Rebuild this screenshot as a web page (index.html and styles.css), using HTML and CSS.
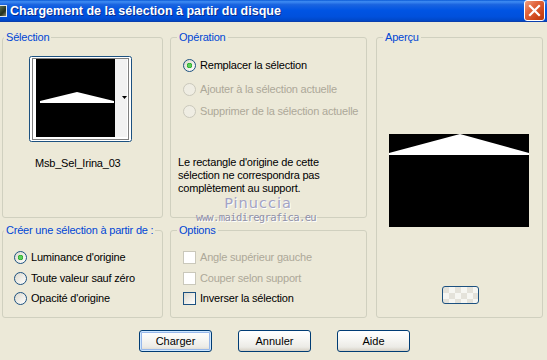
FILE: index.html
```html
<!DOCTYPE html>
<html lang="fr">
<head>
<meta charset="utf-8">
<title>Chargement de la sélection à partir du disque</title>
<link rel="stylesheet" href="styles.css">
</head>
<body>
<div class="window">
  <div class="titlebar">
    <span class="app-icon"></span>
    <span class="title">Chargement de la sélection à partir du disque</span>
    <span class="close">
      <svg width="13" height="13" viewBox="0 0 13 13"><path d="M2 2 L11 11 M11 2 L2 11" stroke="#fff" stroke-width="2.2" stroke-linecap="square"/></svg>
    </span>
  </div>
  <div class="content">
    <div class="groups">
      <section class="group g-sel">
        <span class="legend">Sélection</span>
        <div class="thumb">
          <svg width="103" height="86" viewBox="0 0 103 86">
            <rect x="0.5" y="0.5" width="102" height="85" rx="2" fill="#fff" stroke="#1c5180"/>
            <rect x="3.5" y="2.5" width="96" height="81" fill="none" stroke="#000" stroke-dasharray="1 1"/>
            <rect x="7" y="3" width="79" height="78" fill="#000"/>
            <rect x="86" y="3" width="12" height="78" fill="#f2f2f2"/>
            <polygon points="11,45 48,36 85,45 85,47 11,47" fill="#fff"/>
            <polygon points="93,40 98,40 95.5,43" fill="#000"/>
          </svg>
        </div>
        <div class="name">Msb_Sel_Irina_03</div>
      </section>

      <section class="group g-op">
        <span class="legend">Opération</span>
        <div class="opt r1"><span class="radio checked"></span><span>Remplacer la sélection</span></div>
        <div class="opt r2 disabled"><span class="radio"></span><span>Ajouter à la sélection actuelle</span></div>
        <div class="opt r3 disabled"><span class="radio"></span><span>Supprimer de la sélection actuelle</span></div>
        <p class="note">Le rectangle d'origine de cette sélection ne correspondra pas complètement au support.</p>
        <div class="watermark">
          <span class="wm-name">Pinuccia</span>
          <span class="wm-url">www.maidiregrafica.eu</span>
        </div>
      </section>

      <section class="group g-prev">
        <span class="legend">Aperçu</span>
        <div class="preview">
          <svg width="140" height="93" viewBox="0 0 140 93">
            <rect width="140" height="93" fill="#000"/>
            <polygon points="0,19 71,0 140,19 140,21 0,21" fill="#fff"/>
          </svg>
        </div>
        <div class="mini-btn"></div>
      </section>

      <section class="group g-create">
        <span class="legend">Créer une sélection à partir de :</span>
        <div class="opt c1"><span class="radio checked"></span><span>Luminance d'origine</span></div>
        <div class="opt c2"><span class="radio"></span><span>Toute valeur sauf zéro</span></div>
        <div class="opt c3"><span class="radio"></span><span>Opacité d'origine</span></div>
      </section>

      <section class="group g-opts">
        <span class="legend">Options</span>
        <div class="opt c1 disabled"><span class="check"></span><span>Angle supérieur gauche</span></div>
        <div class="opt c2 disabled"><span class="check"></span><span>Couper selon support</span></div>
        <div class="opt c3"><span class="check"></span><span>Inverser la sélection</span></div>
      </section>
    </div>

    <div class="buttons">
      <button class="btn default">Charger</button>
      <button class="btn">Annuler</button>
      <button class="btn">Aide</button>
    </div>
  </div>
</div>
</body>
</html>
```

FILE: styles.css
```css
* { box-sizing: border-box; }

html, body {
  margin: 0;
  padding: 0;
  background: #ece9d8;
}

body {
  font-family: "Liberation Sans", Arial, sans-serif;
  font-size: 11px;
  letter-spacing: -0.2px;
  color: #000;
}

.window {
  width: 547px;
  height: 360px;
  background: #ece9d8;
  overflow: hidden;
}

/* Title bar */
.titlebar {
  height: 22px;
  display: flex;
  align-items: center;
  background: linear-gradient(#0a5ad6 0%, #3f8cf3 8%, #1a64e0 22%, #0054e3 50%, #0050dc 80%, #0046c4 100%);
  border-bottom: 1px solid #0a3fae;
}

.app-icon {
  width: 7px;
  height: 12px;
  margin-right: 3px;
  background: linear-gradient(135deg, #5d7050, #23301f 60%, #8a8a70);
  border: 1px solid #dfe6ef;
  border-left: 0;
}

.title {
  flex: 1;
  color: #fff;
  font-weight: bold;
  font-size: 12.5px;
  letter-spacing: 0;
  text-shadow: 1px 1px 0 #0a2c8c;
  padding-top: 1px;
}

.close {
  width: 21px;
  height: 21px;
  margin-right: 2px;
  border: 1px solid #fff;
  border-radius: 3px;
  background: linear-gradient(135deg, #f0a082 0%, #e2673f 35%, #cc4418 75%, #b9380e 100%);
  display: flex;
  align-items: center;
  justify-content: center;
}

/* Content */
.content {
  padding: 15px 0 0 2px;
}

.groups {
  display: grid;
  grid-template-columns: 168px 206px 167px;
  grid-template-rows: 181px 88px;
  row-gap: 12px;
}

.group {
  position: relative;
  border: 1px solid #d0d0bf;
  border-radius: 3px;
  display: flex;
  flex-direction: column;
  align-items: flex-start;
}

.g-sel, .g-create { margin-right: 7px; }
.g-op, .g-opts { margin-right: 9px; }

.g-sel { grid-column: 1; grid-row: 1; }
.g-op { grid-column: 2; grid-row: 1; }
.g-prev { grid-column: 3; grid-row: 1 / span 2; }
.g-create { grid-column: 1; grid-row: 2; }
.g-opts { grid-column: 2; grid-row: 2; }

.legend {
  position: absolute;
  top: -8px;
  left: 6px;
  padding: 0 2px;
  line-height: 14px;
  white-space: nowrap;
  background: #ece9d8;
  color: #0046d5;
}

.g-sel .legend, .g-create .legend { left: 1px; }

/* Selection group */
.g-sel { padding: 18px 0 0 26px; }
.thumb { height: 86px; line-height: 0; }
.name {
  margin: 15px 0 0 6px;
  line-height: 13px;
}

/* Options rows */
.opt {
  display: flex;
  align-items: center;
  gap: 4px;
  height: 13px;
  line-height: 13px;
  white-space: nowrap;
}

.opt.disabled { color: #aca899; }

.radio, .check {
  flex: none;
  width: 13px;
  height: 13px;
  border: 1px solid #1c5180;
  background: linear-gradient(135deg, #dcd9cd, #fff);
}

.radio { border-radius: 50%; }

.radio.checked {
  background:
    radial-gradient(circle, #5cd05c 0 1.5px, #21a121 2.5px, transparent 3px),
    linear-gradient(135deg, #dcd9cd, #fff);
}

.disabled .radio {
  border-color: #cac8bb;
  background: #efede3;
}

.disabled .check {
  border-color: #cac8bb;
  background: #fff;
}

/* Operation group */
.g-op { padding: 21px 0 0 12px; }
.g-op .r2 { margin-top: 11px; }
.g-op .r3 { margin-top: 9px; }

.note {
  margin: 38px 0 0 -5px;
  width: 160px;
  line-height: 13px;
}

.watermark {
  position: absolute;
  left: 24px;
  top: 157px;
  width: 122px;
  display: flex;
  flex-direction: column;
  align-items: center;
  pointer-events: none;
}

.wm-name {
  font-family: "DejaVu Sans", sans-serif;
  font-size: 14.5px;
  line-height: 16px;
  letter-spacing: 1px;
  color: #a3a3c4;
  text-shadow: 1px 1px 0 #fff;
  margin-left: 4px;
}

.wm-url {
  font-family: "DejaVu Sans Mono", monospace;
  font-size: 10.5px;
  line-height: 12px;
  color: #8f90a8;
  text-shadow: 1px 1px 0 #fff;
  letter-spacing: -0.6px;
}

/* Preview group */
.g-prev { padding: 96px 0 0 12px; }
.preview { height: 93px; line-height: 0; }

.mini-btn {
  margin: 59px 0 0 53px;
  width: 37px;
  height: 18px;
  border: 1px solid #1c5180;
  border-radius: 3px;
  background: repeating-conic-gradient(#f6f6f2 0 25%, #e4e2da 0 50%) 0 0 / 12px 12px;
}

/* Create group */
.g-create { padding: 20px 0 0 11px; }
.g-create .c2, .g-opts .c2 { margin-top: 8px; }
.g-create .c3, .g-opts .c3 { margin-top: 7px; }

.g-opts { padding: 20px 0 0 12px; }

/* Buttons */
.buttons {
  display: flex;
  gap: 26px;
  padding: 12px 0 0 137px;
}

.btn {
  width: 73px;
  height: 22px;
  border: 1px solid #003c74;
  border-radius: 3px;
  background: linear-gradient(#ffffff 0%, #f7f7f4 40%, #ecebe6 80%, #d6d0c5 100%);
  font-family: "Liberation Sans", Arial, sans-serif;
  font-size: 11px;
  color: #000;
  padding: 0;
}

.btn.default {
  box-shadow: inset 0 0 0 1px #cee7ff, inset 0 0 0 2px #98b8ea;
}
```
